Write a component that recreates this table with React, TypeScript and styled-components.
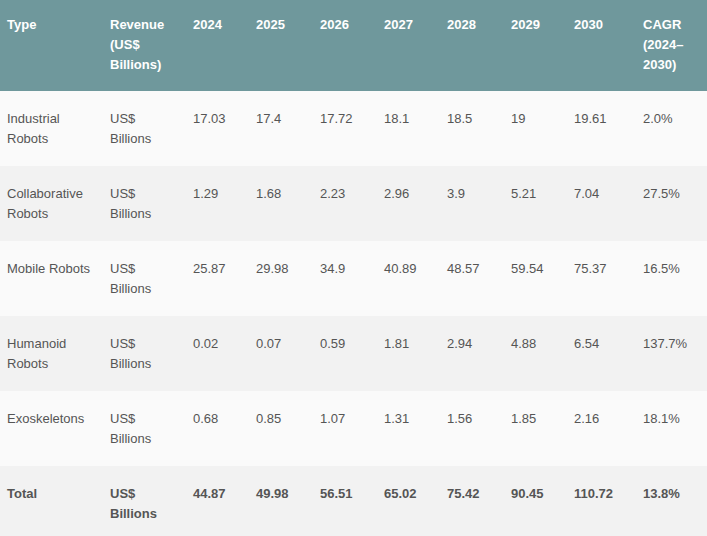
import React from 'react'
import styled, { createGlobalStyle } from 'styled-components'

const GlobalStyle = createGlobalStyle`
  html, body { margin: 0; padding: 0; background: #ffffff; }
  body { font-family: "Liberation Sans", Arial, sans-serif; }
`

type Row = { type: string; values: string[]; cagr: string }

const rows: Row[] = [
  { type: 'Industrial Robots', values: ['17.03', '17.4', '17.72', '18.1', '18.5', '19', '19.61'], cagr: '2.0%' },
  { type: 'Collaborative Robots', values: ['1.29', '1.68', '2.23', '2.96', '3.9', '5.21', '7.04'], cagr: '27.5%' },
  { type: 'Mobile Robots', values: ['25.87', '29.98', '34.9', '40.89', '48.57', '59.54', '75.37'], cagr: '16.5%' },
  { type: 'Humanoid Robots', values: ['0.02', '0.07', '0.59', '1.81', '2.94', '4.88', '6.54'], cagr: '137.7%' },
  { type: 'Exoskeletons', values: ['0.68', '0.85', '1.07', '1.31', '1.56', '1.85', '2.16'], cagr: '18.1%' },
]

const total: Row = {
  type: 'Total',
  values: ['44.87', '49.98', '56.51', '65.02', '75.42', '90.45', '110.72'],
  cagr: '13.8%',
}

const years = ['2024', '2025', '2026', '2027', '2028', '2029', '2030']
const widths = [103, 83, 63, 64, 64, 63, 64, 63, 69, 71]

const Table = styled.table`
  width: 707px;
  border-collapse: collapse;
  table-layout: fixed;
  font-size: 13px;
  line-height: 20px;
  color: #555555;
`

const HeadCell = styled.th`
  background: #6f989c;
  color: #ffffff;
  font-weight: bold;
  text-align: left;
  vertical-align: top;
  padding: 15px 7px 16px;
`

const BodyRow = styled.tr<{ $alt: boolean }>`
  background: ${(p) => (p.$alt ? '#f2f2f2' : '#fafafa')};
`

const Cell = styled.td<{ $bold?: boolean }>`
  text-align: left;
  vertical-align: top;
  padding: 18px 7px 17px;
  height: 40px;
  font-weight: ${(p) => (p.$bold ? 'bold' : 'normal')};
`

const DataRow = ({ row, alt, bold }: { row: Row; alt: boolean; bold?: boolean }) => (
  <BodyRow $alt={alt}>
    <Cell $bold={bold}>{row.type}</Cell>
    <Cell $bold={bold}>US$ Billions</Cell>
    {row.values.map((v, i) => (
      <Cell key={i} $bold={bold}>
        {v}
      </Cell>
    ))}
    <Cell $bold={bold}>{row.cagr}</Cell>
  </BodyRow>
)

const App = () => {
  return (
    <>
      <GlobalStyle />
      <Table>
        <colgroup>
          {widths.map((w, i) => (
            <col key={i} style={{ width: w }} />
          ))}
        </colgroup>
        <thead>
          <tr>
            <HeadCell>Type</HeadCell>
            <HeadCell>Revenue (US$ Billions)</HeadCell>
            {years.map((y) => (
              <HeadCell key={y}>{y}</HeadCell>
            ))}
            <HeadCell>CAGR (2024–2030)</HeadCell>
          </tr>
        </thead>
        <tbody>
          {rows.map((r, i) => (
            <DataRow key={r.type} row={r} alt={i % 2 === 1} />
          ))}
          <DataRow row={total} alt={true} bold />
        </tbody>
      </Table>
    </>
  )
}

export default App
